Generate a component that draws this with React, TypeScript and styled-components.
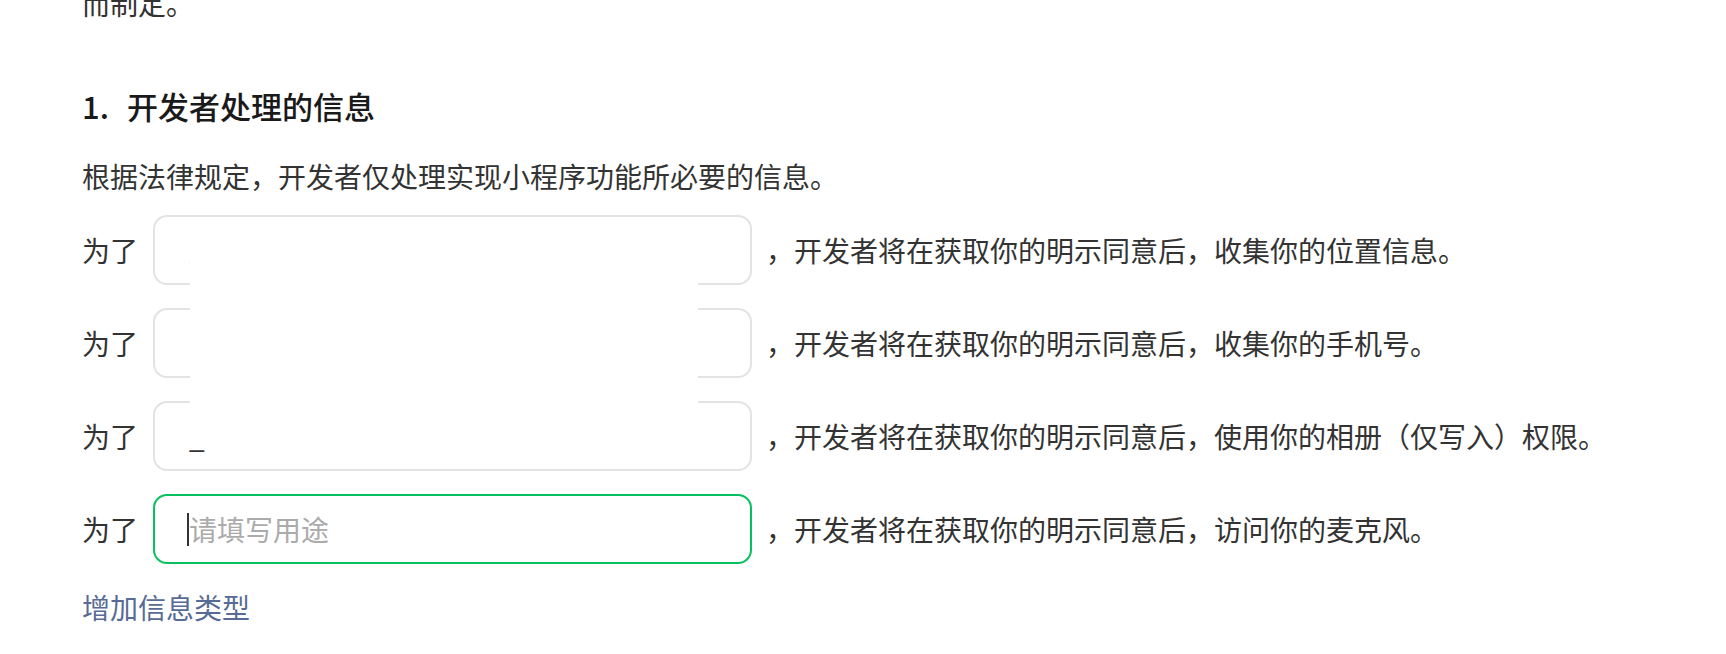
import React from 'react';
import styled, { createGlobalStyle } from 'styled-components';

const TEXT_COLOR = '#333333';
const LINK_COLOR = '#576b95';
const BORDER_COLOR = '#e3e3e3';
const FOCUS_COLOR = '#07c160';

const GlobalStyle = createGlobalStyle`
  html, body {
    margin: 0;
    padding: 0;
    background: #ffffff;
    overflow: hidden;
  }
  body {
    font-family: "Noto Sans CJK SC", "Noto Sans", sans-serif;
    color: ${TEXT_COLOR};
  }
  * {
    box-sizing: border-box;
  }
`;

const Page = styled('div')`
  margin-top: -18px;
  padding-left: 82px;
  display: flex;
  flex-direction: column;
`;

const Paragraph = styled('p')`
  margin: 0;
  font-size: 28px;
  line-height: 42px;
  color: ${TEXT_COLOR};
`;

const SectionTitle = styled('h3')`
  margin: 61px 0 0;
  display: flex;
  font-size: 31px;
  line-height: 42px;
  font-weight: 500;
  color: #1a1a1a;
`;

const TitleIndex = styled('span')`
  width: 45px;
  flex-shrink: 0;
`;

const Intro = styled(Paragraph)`
  margin-top: 28px;
`;

const RowList = styled('div')`
  position: relative;
  margin-top: 18px;
  display: flex;
  flex-direction: column;
  gap: 23px;
`;

const Row = styled('div')`
  display: flex;
  align-items: center;
  height: 70px;
`;

const RowLabel = styled('span')`
  width: 71px;
  flex-shrink: 0;
  font-size: 28px;
  line-height: 42px;
`;

const Field = styled('div')`
  position: relative;
  width: 599px;
  height: 70px;
  flex-shrink: 0;
`;

const PurposeInput = styled('input')<{ $active?: boolean }>`
  width: 100%;
  height: 100%;
  padding: 0 20px 0 34px;
  border: 2px solid ${p => (p.$active ? FOCUS_COLOR : BORDER_COLOR)};
  border-radius: 14px;
  background: #fff;
  outline: none;
  font-family: inherit;
  font-size: 28px;
  color: ${TEXT_COLOR};
  caret-color: transparent;

  &::placeholder {
    color: #ababab;
  }
`;

const Caret = styled('span')`
  position: absolute;
  left: 34px;
  top: 19px;
  width: 2px;
  height: 33px;
  background: ${TEXT_COLOR};
`;

const RowText = styled('span')`
  margin-left: 14px;
  font-size: 28px;
  line-height: 42px;
  white-space: nowrap;
`;

// blank suggestion popup lying over the first inputs in the shot
const SuggestPopup = styled('div')`
  position: absolute;
  left: 108px;
  top: 13px;
  width: 508px;
  height: 217px;
  background: #fff;
`;

const AddLink = styled('a')`
  margin-top: 22px;
  font-size: 28px;
  line-height: 42px;
  color: ${LINK_COLOR};
  text-decoration: none;
  cursor: pointer;
  align-self: flex-start;
`;

type PurposeRow = {
  value: string;
  text: string;
  active?: boolean;
};

const rows: PurposeRow[] = [
  { value: '展示附近门店', text: '，开发者将在获取你的明示同意后，收集你的位置信息。' },
  { value: '登录验证身份', text: '，开发者将在获取你的明示同意后，收集你的手机号。' },
  { value: '_', text: '，开发者将在获取你的明示同意后，使用你的相册（仅写入）权限。' },
  { value: '', text: '，开发者将在获取你的明示同意后，访问你的麦克风。', active: true },
];

function App() {
  return (
    <>
      <GlobalStyle />
      <Page>
        <Paragraph>而制定。</Paragraph>
        <SectionTitle>
          <TitleIndex>1.</TitleIndex>
          开发者处理的信息
        </SectionTitle>
        <Intro>根据法律规定，开发者仅处理实现小程序功能所必要的信息。</Intro>
        <RowList>
          {rows.map((row, i) => (
            <Row key={i}>
              <RowLabel>为了</RowLabel>
              <Field>
                <PurposeInput
                  $active={row.active}
                  defaultValue={row.value}
                  placeholder="请填写用途"
                />
                {row.active && <Caret />}
              </Field>
              <RowText>{row.text}</RowText>
            </Row>
          ))}
          <SuggestPopup />
        </RowList>
        <AddLink>增加信息类型</AddLink>
      </Page>
    </>
  );
}

export default App;
